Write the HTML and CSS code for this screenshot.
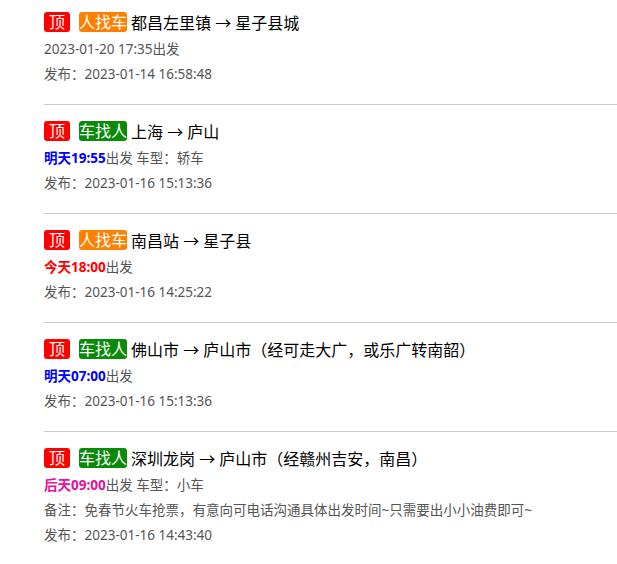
FILE: index.html
```html
<!DOCTYPE html>
<html lang="zh-CN">
<head>
    <meta charset="UTF-8">
    <meta name="viewport" content="width=device-width, initial-scale=1.0">
    <title>拼车信息</title>
    <link rel="stylesheet" href="styles.css">
</head>
<body>
    <div class="trip-list">
        <div class="trip-item">
            <div class="trip-title">
                <span class="tag tag-top">顶</span>
                <span class="tag tag-type people">人找车</span>
                <span class="route">都昌左里镇 → 星子县城</span>
            </div>
            <p class="trip-line">2023-01-20 17:35出发</p>
            <p class="trip-line">发布：2023-01-14 16:58:48</p>
        </div>

        <div class="trip-item">
            <div class="trip-title">
                <span class="tag tag-top">顶</span>
                <span class="tag tag-type car">车找人</span>
                <span class="route">上海 → 庐山</span>
            </div>
            <p class="trip-line"><b class="when tomorrow">明天19:55</b>出发 车型：轿车</p>
            <p class="trip-line">发布：2023-01-16 15:13:36</p>
        </div>

        <div class="trip-item">
            <div class="trip-title">
                <span class="tag tag-top">顶</span>
                <span class="tag tag-type people">人找车</span>
                <span class="route">南昌站 → 星子县</span>
            </div>
            <p class="trip-line"><b class="when today">今天18:00</b>出发</p>
            <p class="trip-line">发布：2023-01-16 14:25:22</p>
        </div>

        <div class="trip-item">
            <div class="trip-title">
                <span class="tag tag-top">顶</span>
                <span class="tag tag-type car">车找人</span>
                <span class="route">佛山市 → 庐山市（经可走大广，或乐广转南韶）</span>
            </div>
            <p class="trip-line"><b class="when tomorrow">明天07:00</b>出发</p>
            <p class="trip-line">发布：2023-01-16 15:13:36</p>
        </div>

        <div class="trip-item">
            <div class="trip-title">
                <span class="tag tag-top">顶</span>
                <span class="tag tag-type car">车找人</span>
                <span class="route">深圳龙岗 → 庐山市（经赣州吉安，南昌）</span>
            </div>
            <p class="trip-line"><b class="when later">后天09:00</b>出发 车型：小车</p>
            <p class="trip-line">备注：免春节火车抢票，有意向可电话沟通具体出发时间~只需要出小小油费即可~</p>
            <p class="trip-line">发布：2023-01-16 14:43:40</p>
        </div>
    </div>
</body>
</html>
```

FILE: styles.css
```css
body {
    font-family: "Noto Sans", "Noto Sans CJK SC", sans-serif;
    margin: 0;
    padding: 0;
    background-color: #fff;
}
.trip-list {
    padding-left: 44px;
}
.trip-item {
    padding: 11px 0 17px;
    border-bottom: 1px solid #ccc;
}
.trip-item:first-child {
    padding-top: 7px;
}
.trip-title {
    display: flex;
    align-items: center;
    height: 30px;
    font-size: 16px;
    color: #000;
    white-space: nowrap;
}
.tag {
    display: inline-block;
    height: 20px;
    line-height: 20px;
    color: #fff;
    border-radius: 3px;
}
.tag-top {
    background-color: #f00;
    padding: 0 5px;
    margin-right: 9px;
}
.tag-type {
    margin-right: 4px;
}
.tag-type.people {
    background-color: #ff8000;
}
.tag-type.car {
    background-color: #0a8a0a;
}
.trip-line {
    margin: 0;
    font-size: 13.5px;
    line-height: 25px;
    color: #555;
    white-space: nowrap;
}
.when {
    font-weight: bold;
}
.when.tomorrow {
    color: #00f;
}
.when.today {
    color: #f00;
}
.when.later {
    color: #e4119c;
}
```
